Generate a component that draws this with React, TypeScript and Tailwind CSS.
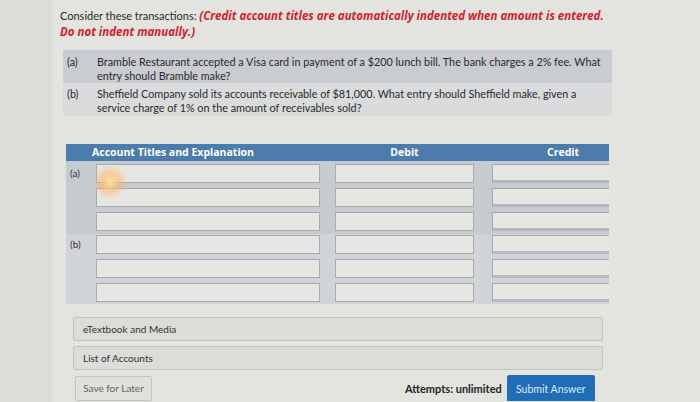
import React from 'react';

const lato = { fontFamily: 'Lato, "Liberation Sans", sans-serif' };
const openSans = { fontFamily: '"Open Sans", "Liberation Sans", sans-serif' };

function Field({ credit = false }: { credit?: boolean }) {
  return (
    <div
      className={
        credit
          ? 'h-[19px] bg-[#e6e6e3] border border-r-0 border-[#a9aaab] border-b-[3px] border-b-[#b5b9bd]'
          : 'h-[19px] bg-[#e6e6e3] border border-[#a9aaab]'
      }
    />
  );
}

function EntryRow({ label }: { label?: string }) {
  return (
    <div className="flex h-[19px]">
      <div className="w-[30px] text-[10px] text-[#333] pl-[4px] leading-[19px]" style={lato}>
        {label}
      </div>
      <div className="w-[224px]">
        <Field />
      </div>
      <div className="w-[15px]" />
      <div className="w-[139px]">
        <Field />
      </div>
      <div className="w-[18px]" />
      <div className="flex-1">
        <Field credit />
      </div>
    </div>
  );
}

export default function App() {
  return (
    <div className="relative w-[700px] h-[402px] overflow-hidden bg-[#e3e3e0]" style={lato}>
      <div className="absolute inset-y-0 left-0 w-[52px] bg-[#dcdcd9]" />

      <div className="relative pl-[60px] pt-[8px]">
        {/* instructions */}
        <p className="w-[548px] text-[11px] leading-[16px] text-[#2b2b2b]">
          <span>Consider these transactions: </span>
          <span className="text-[#d1222e] font-bold italic text-[11.5px]" style={openSans}>
            (Credit account titles are automatically indented when amount is entered. Do not indent manually.)
          </span>
        </p>

        {/* transactions */}
        <div className="mt-[10px] ml-[3px] w-[549px] text-[10.8px] leading-[13.5px] text-[#2a2a2a]">
          <div className="flex bg-[#c9ccd0] h-[33px] pt-[5px]">
            <span className="w-[34px] pl-[4px]">(a)</span>
            <span className="w-[512px]">
              Bramble Restaurant accepted a Visa card in payment of a $200 lunch bill. The bank charges a 2% fee. What entry should Bramble make?
            </span>
          </div>
          <div className="flex bg-[#d9dbdd] h-[33px] pt-[4px]">
            <span className="w-[34px] pl-[4px]">(b)</span>
            <span className="w-[490px]">
              Sheffield Company sold its accounts receivable of $81,000. What entry should Sheffield make, given a service charge of 1% on the amount of receivables sold?
            </span>
          </div>
        </div>

        {/* journal table */}
        <div className="mt-[28px] ml-[6px] w-[543px]">
          <div className="flex h-[17px] bg-[#4b7cab] text-white font-bold text-[10.5px] leading-[17px]" style={openSans}>
            <div className="w-[254px] pl-[26px]">Account Titles and Explanation</div>
            <div className="w-[15px]" />
            <div className="w-[139px] text-center">Debit</div>
            <div className="w-[18px]" />
            <div className="flex-1 pl-[55px]">Credit</div>
          </div>
          <div className="bg-[#c6cbd0] pt-[3px] pb-[3px] flex flex-col gap-[5px]">
            <EntryRow label="(a)" />
            <EntryRow />
            <EntryRow />
          </div>
          <div className="bg-[#d0d4d8] pt-[1px] pb-[2px] flex flex-col gap-[5px]">
            <EntryRow label="(b)" />
            <EntryRow />
            <EntryRow />
          </div>
        </div>

        {/* footer links */}
        <div className="mt-[13px] ml-[13px] w-[530px] flex flex-col gap-[5px]">
          <div className="h-[24px] bg-[#dcdcd9] border border-[#c2c2bf] rounded-[2px] pl-[9px] text-[10px] leading-[22px] text-[#333]">
            eTextbook and Media
          </div>
          <div className="h-[24px] bg-[#dcdcd9] border border-[#c2c2bf] rounded-[2px] pl-[9px] text-[10px] leading-[22px] text-[#333]">
            List of Accounts
          </div>
          <div className="flex items-end">
            <div className="ml-[2px] w-[77px] h-[25px] bg-[#e0e0dd] border border-[#c2c2bf] rounded-[2px] text-[10px] leading-[23px] text-center text-[#666]">
              Save for Later
            </div>
            <div className="ml-[253px] mb-[4px] text-[11px] font-bold text-[#222]">Attempts: unlimited</div>
            <div className="ml-[5px] w-[88px] h-[26px] bg-[#1f6db7] rounded-t-[2px] text-[10.5px] leading-[28px] text-center text-[#dce9f5]">
              Submit Answer
            </div>
          </div>
        </div>
      </div>

      {/* glare from the photo */}
      <div className="absolute left-[92px] top-[164px] w-[36px] h-[36px] rounded-full bg-[radial-gradient(circle,#ffe08a_0%,#ffb46688_35%,transparent_70%)]" />
    </div>
  );
}
